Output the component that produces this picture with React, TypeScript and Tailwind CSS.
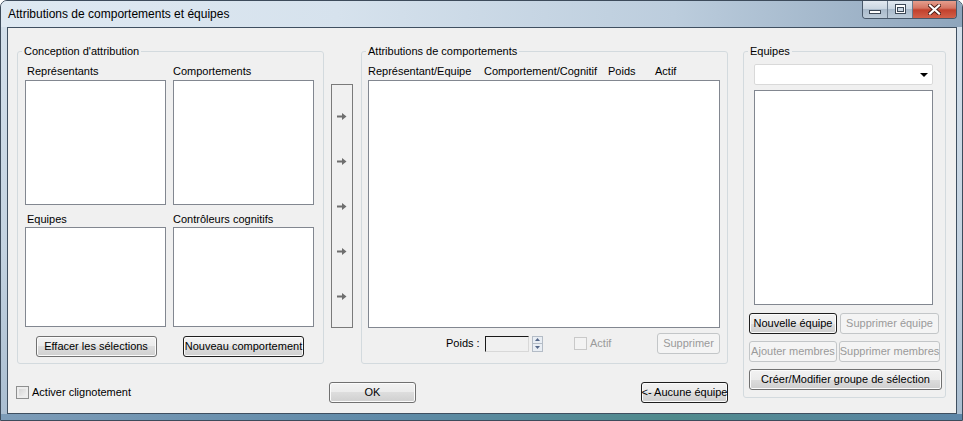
import * as React from "react";

interface ButtonProps {
  label: string;
  className?: string;
  disabled?: boolean;
  focused?: boolean;
}

// Vista-like push button
function DlgButton({ label, className = "", disabled = false, focused = false }: ButtonProps) {
  const look = disabled
    ? "border-[#c3c6c8] bg-[#f4f4f4] text-[#9a9a9a]"
    : focused
      ? "border-[#1e1e1e] bg-[linear-gradient(#f2f2f2_0%,#ebebeb_50%,#dddddd_50%,#cfcfcf_100%)] shadow-[inset_0_0_0_1px_#fbfbfb]"
      : "border-[#707070] bg-[linear-gradient(#f2f2f2_0%,#ebebeb_50%,#dddddd_50%,#cfcfcf_100%)] shadow-[inset_0_0_0_1px_#fbfbfb]";
  return (
    <div
      className={`flex h-[21px] shrink-0 items-center justify-center whitespace-nowrap rounded-[3px] border leading-none ${look} ${className}`}
    >
      {label}
    </div>
  );
}

function CheckBox({ disabled = false }: { disabled?: boolean }) {
  return (
    <div
      className={`h-[13px] w-[13px] shrink-0 border ${
        disabled
          ? "border-[#c9c9c9] bg-[#f3f3f3]"
          : "border-[#8e8f8f] bg-[linear-gradient(135deg,#cfcfcf,#f7f7f7)] shadow-[inset_0_0_0_2px_#ededed]"
      }`}
    />
  );
}

function ListBox({ className = "" }: { className?: string }) {
  return <div className={`shrink-0 border border-[#828790] bg-white ${className}`} />;
}

function Arrow() {
  return (
    <svg width="10" height="7" viewBox="0 0 10 7" className="block">
      <rect x="0" y="2.5" width="6" height="2" fill="#6e6e6e" />
      <polygon points="5,0 9.5,3.5 5,7" fill="#6e6e6e" />
    </svg>
  );
}

function WindowControls() {
  return (
    <div className="-mt-px mr-[5px] ml-auto flex h-[19px] overflow-hidden rounded-b-[4px] border border-t-0 border-[#48586a]">
      <div className="flex w-[25px] items-end justify-center border-r border-[#6a7a8c] bg-[linear-gradient(#e4ebf2_0%,#c9d5e1_50%,#a9bacb_51%,#bccbd9_100%)] pb-[4px]">
        <svg width="12" height="4" viewBox="0 0 12 4">
          <rect x="0.5" y="0.5" width="11" height="3" fill="#ffffff" stroke="#3c4856" />
        </svg>
      </div>
      <div className="flex w-[25px] items-center justify-center border-r border-[#6a7a8c] bg-[linear-gradient(#e4ebf2_0%,#c9d5e1_50%,#a9bacb_51%,#bccbd9_100%)]">
        <svg width="11" height="10" viewBox="0 0 11 10">
          <rect x="0.5" y="0.5" width="10" height="9" fill="#ffffff" stroke="#3c4856" />
          <rect x="2.5" y="3.5" width="6" height="4" fill="#c9d5e1" stroke="#3c4856" />
        </svg>
      </div>
      <div className="flex w-[43px] items-center justify-center bg-[linear-gradient(#e8a493_0%,#d47563_45%,#c2412d_55%,#d2604a_100%)]">
        <svg width="13" height="11" viewBox="0 0 13 11">
          <path d="M2 1.5 L11 9.5 M11 1.5 L2 9.5" stroke="#4a1f18" strokeWidth="4" strokeLinecap="square" />
          <path d="M2 1.5 L11 9.5 M11 1.5 L2 9.5" stroke="#ffffff" strokeWidth="2.2" strokeLinecap="square" />
        </svg>
      </div>
    </div>
  );
}

function Spinner() {
  return (
    <div className="ml-[3px] flex h-[16px] w-[11px] flex-col border border-[#b4bcc6] bg-[#e9eef4]">
      <div className="flex flex-1 items-center justify-center border-b border-[#b4bcc6]">
        <svg width="5" height="3" viewBox="0 0 5 3">
          <polygon points="0,3 2.5,0 5,3" fill="#56698a" />
        </svg>
      </div>
      <div className="flex flex-1 items-center justify-center">
        <svg width="5" height="3" viewBox="0 0 5 3">
          <polygon points="0,0 2.5,3 5,0" fill="#56698a" />
        </svg>
      </div>
    </div>
  );
}

export default function App() {
  return (
    <div className="relative flex h-[421px] w-[963px] flex-col overflow-hidden rounded-t-[7px] border border-[#3d4b5b] bg-[linear-gradient(#d5e1ec_0%,#c3d2e0_60%,#a9bdd0_100%)] font-['Liberation_Sans',Arial,sans-serif] text-[11px] text-black">
      {/* title bar */}
      <div className="flex h-[26px] shrink-0 items-start bg-[linear-gradient(90deg,#dfe9f2_0%,#d6e2ed_35%,#bccddd_70%,#8ea5bc_100%)]">
        <span className="mt-[6px] ml-[7px] text-[12px] leading-[15px]">Attributions de comportements et équipes</span>
        <WindowControls />
      </div>

      {/* client area */}
      <div className="ml-[6px] flex h-[387px] w-[950px] shrink-0 border border-[#3f4f60] bg-[#f0f0f0] pt-[16px] pl-[9px]">
        <div className="flex w-[711px] shrink-0 flex-col">
          <div className="flex items-start">
            {/* Conception d'attribution */}
            <fieldset className="h-[320px] w-[307px] shrink-0 rounded-[3px] border border-[#d3dade] p-0">
              <legend className="ml-[4px] px-[2px] leading-[14px]">Conception d'attribution</legend>
              <div className="flex flex-col px-[7px] pt-[6px]">
                <div className="flex gap-[7px]">
                  <div className="flex w-[141px] flex-col">
                    <span className="mb-[2px] ml-[2px] leading-[14px]">Représentants</span>
                    <ListBox className="h-[125px]" />
                  </div>
                  <div className="flex w-[141px] flex-col">
                    <span className="mb-[2px] leading-[14px]">Comportements</span>
                    <ListBox className="h-[125px]" />
                  </div>
                </div>
                <div className="mt-[7px] flex gap-[7px]">
                  <div className="flex w-[141px] flex-col">
                    <span className="mb-[1px] ml-[2px] leading-[14px]">Equipes</span>
                    <ListBox className="h-[100px]" />
                  </div>
                  <div className="flex w-[141px] flex-col">
                    <span className="mb-[1px] leading-[14px]">Contrôleurs cognitifs</span>
                    <ListBox className="h-[100px]" />
                  </div>
                </div>
                <div className="mt-[9px] flex gap-[7px]">
                  <div className="flex w-[141px] justify-center pl-[1px]">
                    <DlgButton label="Effacer les sélections" className="w-[121px]" />
                  </div>
                  <div className="flex w-[141px] justify-center">
                    <DlgButton label="Nouveau comportement" className="w-[121px]" focused />
                  </div>
                </div>
              </div>
            </fieldset>

            {/* arrow column */}
            <div className="mt-[40px] ml-[7px] flex h-[244px] w-[22px] shrink-0 flex-col items-center gap-[38px] border border-[#7a7a7a] pt-[28px]">
              <Arrow />
              <Arrow />
              <Arrow />
              <Arrow />
              <Arrow />
            </div>

            {/* Attributions de comportements */}
            <fieldset className="ml-[8px] h-[320px] w-[367px] shrink-0 rounded-[3px] border border-[#d3dade] p-0">
              <legend className="ml-[4px] px-[2px] leading-[14px]">Attributions de comportements</legend>
              <div className="flex flex-col pt-[6px] pl-[6px]">
                <div className="mb-[2px] flex leading-[14px] whitespace-nowrap">
                  <span className="w-[116px]">Représentant/Equipe</span>
                  <span className="w-[124px]">Comportement/Cognitif</span>
                  <span className="w-[47px]">Poids</span>
                  <span>Actif</span>
                </div>
                <ListBox className="h-[248px] w-[352px]" />
                <div className="mt-[5px] flex h-[21px] w-[352px] items-center">
                  <span className="ml-[78px] w-[39px] whitespace-nowrap">Poids :</span>
                  <div className="h-[16px] w-[44px] border border-t-[#1a1a1a] border-r-[#d8d8d8] border-b-[#d8d8d8] border-l-[#1a1a1a] bg-[#f0f0f0]" />
                  <Spinner />
                  <div className="ml-[31px]">
                    <CheckBox disabled />
                  </div>
                  <span className="ml-[3px] text-[#9a9a9a]">Actif</span>
                  <DlgButton label="Supprimer" className="ml-auto w-[63px]" disabled />
                </div>
              </div>
            </fieldset>
          </div>

          {/* bottom row */}
          <div className="mt-[18px] -ml-px flex h-[21px] items-center">
            <div className="flex w-[313px] items-center">
              <CheckBox />
              <span className="ml-[3px]">Activer clignotement</span>
            </div>
            <DlgButton label="OK" className="w-[87px]" />
            <DlgButton label="<- Aucune équipe" className="ml-[225px] w-[87px]" focused />
          </div>
        </div>

        {/* Equipes */}
        <fieldset className="ml-[15px] h-[354px] w-[203px] shrink-0 rounded-[3px] border border-[#d3dade] p-0">
          <legend className="ml-[4px] px-[2px] leading-[14px]">Equipes</legend>
          <div className="flex flex-col pt-[6px] pl-[5px]">
            <div className="ml-[5px] flex h-[21px] w-[179px] items-center justify-end rounded-[2px] border border-[#d9d9d9] bg-white pr-[4px]">
              <svg width="8" height="4" viewBox="0 0 8 4">
                <polygon points="0,0 8,0 4,4" fill="#000000" />
              </svg>
            </div>
            <ListBox className="mt-[5px] ml-[5px] h-[215px] w-[179px]" />
            <div className="mt-[8px] flex">
              <DlgButton label="Nouvelle équipe" className="w-[88px]" focused />
              <DlgButton label="Supprimer équipe" className="ml-[3px] w-[99px]" disabled />
            </div>
            <div className="mt-[7px] flex">
              <DlgButton label="Ajouter membres" className="w-[88px]" disabled />
              <DlgButton label="Supprimer membres" className="ml-[2px] w-[101px]" disabled />
            </div>
            <DlgButton label="Créer/Modifier groupe de sélection" className="mt-[7px] w-[193px]" />
          </div>
        </fieldset>
      </div>

      {/* bottom frame */}
      <div className="mt-auto h-[6px] bg-[linear-gradient(90deg,#7d9cb8_0%,#5f8aa8_40%,#4f8a8c_70%,#5d86a8_100%)]" />
    </div>
  );
}
